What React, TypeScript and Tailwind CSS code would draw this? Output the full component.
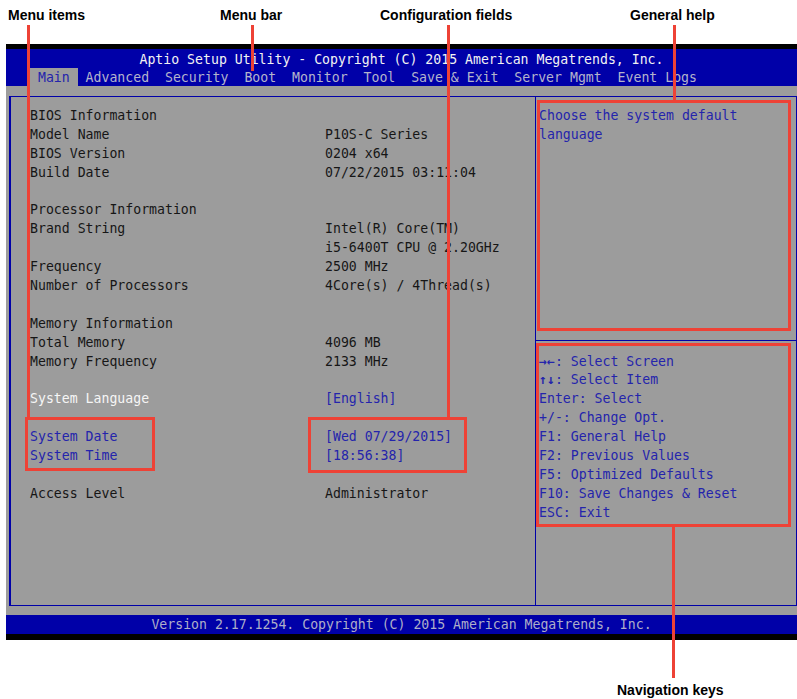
import React from "react";

const mono = "font-['DejaVu_Sans_Mono','Liberation_Mono',monospace] text-[13.2px]";
const label = "font-['Liberation_Sans',Arial,sans-serif] font-bold text-[14px] text-black";

type Row = { l?: string; v?: string; lc?: string; vc?: string };

const rows: Row[] = [
  { l: "BIOS Information" },
  { l: "Model Name", v: "P10S-C Series" },
  { l: "BIOS Version", v: "0204 x64" },
  { l: "Build Date", v: "07/22/2015 03:11:04" },
  {},
  { l: "Processor Information" },
  { l: "Brand String", v: "Intel(R) Core(TM)" },
  { v: "i5-6400T CPU @ 2.20GHz" },
  { l: "Frequency", v: "2500 MHz" },
  { l: "Number of Processors", v: "4Core(s) / 4Thread(s)" },
  {},
  { l: "Memory Information" },
  { l: "Total Memory", v: "4096 MB" },
  { l: "Memory Frequency", v: "2133 MHz" },
  {},
  { l: "System Language", v: "[English]", lc: "text-[#f6f6f6]", vc: "text-[#2424ac]" },
  {},
  { l: "System Date", v: "[Wed 07/29/2015]", lc: "text-[#2424ac]", vc: "text-[#2424ac]" },
  { l: "System Time", v: "[18:56:38]", lc: "text-[#2424ac]", vc: "text-[#2424ac]" },
  {},
  { l: "Access Level", v: "Administrator" },
];

const tabs = ["Main", "Advanced", "Security", "Boot", "Monitor", "Tool", "Save & Exit", "Server Mgmt", "Event Logs"];

const keys: [string, string][] = [
  ["→←", ": Select Screen"],
  ["↑↓", ": Select Item"],
  ["", "Enter: Select"],
  ["", "+/-: Change Opt."],
  ["", "F1: General Help"],
  ["", "F2: Previous Values"],
  ["", "F5: Optimized Defaults"],
  ["", "F10: Save Changes & Reset"],
  ["", "ESC: Exit"],
];

export default function App() {
  return (
    <div className="relative w-[797px] h-[699px] bg-white overflow-hidden">
      <div className="h-[44px]" />
      <div className={`ml-[6px] w-[791px] flex flex-col ${mono}`}>
        <div className="h-[5px] bg-black" />
        <div className="bg-[#0000a8] h-[37px] flex flex-col">
          <div className="h-[19px] leading-[21px] text-center text-[#f2f2f2] whitespace-pre overflow-hidden">
            Aptio Setup Utility - Copyright (C) 2015 American Megatrends, Inc.
          </div>
          <div className="h-[18px] flex pl-[24px] whitespace-pre">
            {tabs.map((t, i) => (
              <div
                key={t}
                className={`h-[18px] leading-[20px] overflow-hidden ${
                  i === 0 ? "bg-[#9c9c9c] text-[#2424ac]" : "text-[#b4b4cc]"
                }`}
              >
                {" " + t + " "}
              </div>
            ))}
          </div>
        </div>
        <div className="bg-[#9c9c9c] pt-[10px] pl-[3px] pb-[9px]">
          <div className="h-[510px] flex border-y border-r border-l-2 border-[#0000a8]">
            <div className="w-[524px] pl-[19px] pt-[9px] text-[#161616]">
              {rows.map((r, i) => (
                <div key={i} className="flex h-[18.9px] leading-[19px] whitespace-pre">
                  <span className={`w-[295px] ${r.lc ?? ""}`}>{r.l ?? ""}</span>
                  <span className={r.vc ?? ""}>{r.v ?? ""}</span>
                </div>
              ))}
            </div>
            <div className="flex-1 flex flex-col border-l border-[#0000a8] text-[#2424ac]">
              <div className="h-[244px] pl-[3px] pt-[9px] border-b border-[#0000a8]">
                <div className="h-[18.9px] leading-[19px]">Choose the system default</div>
                <div className="h-[18.9px] leading-[19px]">language</div>
              </div>
              <div className="pl-[3px] pt-[10.5px]">
                {keys.map(([a, k]) => (
                  <div key={k} className="h-[18.9px] leading-[19px] whitespace-pre">
                    {a && <span className="font-bold">{a}</span>}
                    {k}
                  </div>
                ))}
              </div>
            </div>
          </div>
        </div>
        <div className="bg-[#0000a8] h-[19px] leading-[20px] text-center text-[#aeaec8] whitespace-pre overflow-hidden">
          Version 2.17.1254. Copyright (C) 2015 American Megatrends, Inc.
        </div>
        <div className="h-[6px] bg-black" />
      </div>

      {/* Annotations */}
      <div className={`absolute left-[8px] top-[6px] leading-[18px] ${label}`}>Menu items</div>
      <div className={`absolute left-[220px] top-[6px] leading-[18px] ${label}`}>Menu bar</div>
      <div className={`absolute left-[380px] top-[6px] leading-[18px] ${label}`}>Configuration fields</div>
      <div className={`absolute left-[630px] top-[6px] leading-[18px] ${label}`}>General help</div>
      <div className={`absolute left-[617px] top-[681px] leading-[18px] ${label}`}>Navigation keys</div>

      <div className="absolute left-[27px] top-[25px] w-[3px] h-[392px] bg-[#ee4236]" />
      <div className="absolute left-[25px] top-[417px] w-[130px] h-[54px] border-[3px] border-[#ee4236]" />

      <div className="absolute left-[251px] top-[25px] w-[3px] h-[46px] bg-[#ee4236]" />

      <div className="absolute left-[447px] top-[25px] w-[3px] h-[392px] bg-[#ee4236]" />
      <div className="absolute left-[308px] top-[417px] w-[159px] h-[56px] border-[3px] border-[#ee4236]" />

      <div className="absolute left-[673px] top-[25px] w-[3px] h-[75px] bg-[#ee4236]" />
      <div className="absolute left-[537px] top-[100px] w-[254px] h-[231px] border-[3px] border-[#ee4236]" />

      <div className="absolute left-[536px] top-[343px] w-[255px] h-[184px] border-[3px] border-[#ee4236]" />
      <div className="absolute left-[672px] top-[527px] w-[3px] h-[151px] bg-[#ee4236]" />
    </div>
  );
}
